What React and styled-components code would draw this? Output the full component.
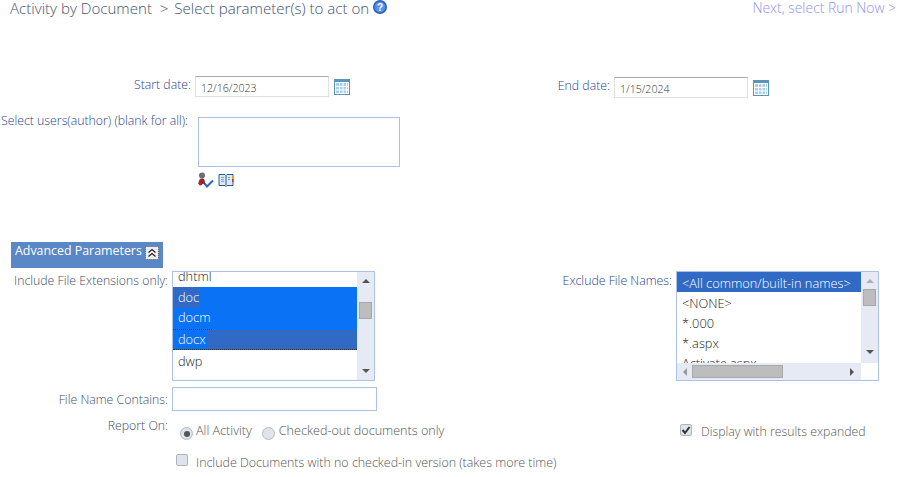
import React from 'react'
import styled, { createGlobalStyle } from 'styled-components'

const GlobalStyle = createGlobalStyle`
  html, body {
    margin: 0;
    padding: 0;
    background: #fff;
  }
  body {
    font-family: 'Open Sans', 'Noto Sans', sans-serif;
    font-weight: 300;
    font-size: 12.3px;
    color: #444;
    overflow: hidden;
  }
`

const Page = styled.div`
  width: 897px;
  height: 477px;
  overflow: hidden;
`

const Header = styled.div`
  display: flex;
  justify-content: space-between;
  height: 76px;
  padding: 0 1px 0 10px;
  line-height: 16px;
`

const Crumb = styled.div`
  color: #44546f;
  font-size: 15.1px;
  display: flex;
  gap: 4px;
`

const CrumbStep = styled.span`
  margin-left: 2px;
`

const NextLink = styled.div`
  color: #9292ee;
  font-size: 13.9px;
`

const Row = styled.div`
  display: flex;
  margin-top: ${p => p.$top || 0}px;
`

const Side = styled.div`
  display: flex;
  width: ${p => p.$width}px;
  margin-top: ${p => p.$top || 0}px;
  flex: none;
`

const Label = styled.div`
  width: ${p => p.$width}px;
  flex: none;
  text-align: right;
  white-space: nowrap;
  color: #1f3f8f;
  line-height: 16px;
  margin-top: ${p => p.$shift || 0}px;
`

const GreyLabel = styled(Label)`
  color: #444c6a;
`

const TextBox = styled.div`
  box-sizing: border-box;
  width: ${p => p.$width}px;
  height: ${p => p.$height}px;
  margin-left: ${p => p.$left || 4}px;
  border: 1px solid ${p => p.$date ? '#e1e1e1' : '#abc1e6'};
  border-top-color: ${p => p.$date ? '#a9a9a9' : '#abc1e6'};
  padding: 4px 5px;
  font-size: 10.6px;
  line-height: 14px;
  color: #333;
`

const CalendarIcon = styled.svg`
  width: 16px;
  height: 16px;
  margin: 3px 0 0 5px;
`

const PickerIcons = styled.div`
  display: flex;
  gap: 4px;
  margin: 5px 0 0 198px;
  height: 16px;
`

const AdvancedBar = styled.div`
  width: 152px;
  height: 26px;
  margin: 54px 0 0 11px;
  box-sizing: border-box;
  padding: 1px 0 0 4px;
  display: flex;
  align-items: flex-start;
  gap: 3px;
  background: #5a87c5;
  color: #fff;
  font-weight: 400;
  font-size: 12.4px;
  line-height: 16px;
  white-space: nowrap;
`

const ListBox = styled.div`
  box-sizing: border-box;
  display: grid;
  grid-template-columns: 1fr 17px;
  grid-template-rows: ${p => p.$hscroll ? '1fr 17px' : '1fr'};
  width: 203px;
  height: 110px;
  margin-left: 4px;
  border: 1px solid #abc1e6;
  overflow: hidden;
  font-size: 12.8px;
  color: #333;
`

const ListItems = styled.div`
  overflow: hidden;
  min-width: 0;
`

const ListInner = styled.div`
  margin-top: ${p => p.$offset || 0}px;
`

const Option = styled.div`
  box-sizing: border-box;
  height: ${p => p.$height || 20}px;
  line-height: ${p => p.$line || p.$height || 20}px;
  padding-left: 5px;
  white-space: nowrap;
  color: ${p => p.$selected ? '#fff' : '#222'};
  background: ${p => p.$tone === 'dark' ? '#316ac5' : p.$selected ? '#0a72f5' : 'transparent'};
  border-bottom: ${p => p.$dotted ? '1px dotted #333' : 'none'};
`

const OptionText = styled.span`
  display: inline-block;
  height: 100%;
  margin-left: -5px;
  padding: 0 1px 0 5px;
  background: ${p => p.$bg || 'transparent'};
  border-bottom: ${p => p.$dotted ? '1px dotted #333' : 'none'};
  box-sizing: border-box;
`

const VBar = styled.div`
  background: #e6eaf4;
  display: flex;
  flex-direction: column;
  align-items: center;
  justify-content: space-between;
  padding: 7px 0 ${p => p.$bottom || 7}px;
  position: relative;
`

const HBar = styled.div`
  background: #e6eaf4;
  display: flex;
  align-items: center;
  padding: 0 7px 0 6px;
`

const Thumb = styled.div`
  position: absolute;
  box-sizing: border-box;
  left: 2px;
  top: ${p => p.$top}px;
  width: 13px;
  height: 17px;
  background: #bdbdbd;
  border: 1px solid #a8a8a8;
`

const HThumb = styled.div`
  box-sizing: border-box;
  width: 91px;
  height: 13px;
  margin: 0 auto 0 5px;
  background: #bdbdbd;
  border: 1px solid #a8a8a8;
`

const Arrow = styled.div`
  width: 0;
  height: 0;
  border-style: solid;
  border-color: transparent;
  border-width: ${p => p.$horizontal ? '4px 0 4px 4px' : '0 4px 4px'};
  border-bottom-color: ${p => p.$horizontal ? 'transparent' : p.$color || '#555'};
  border-left-color: ${p => p.$horizontal ? p.$color || '#555' : 'transparent'};
  transform: ${p => p.$flip ? 'rotate(180deg)' : 'none'};
`

const Corner = styled.div`
  background: #fff;
`

const OptionsLine = styled.div`
  display: flex;
  align-items: center;
  margin-left: ${p => p.$left}px;
  margin-top: ${p => p.$top || 0}px;
  font-size: ${p => p.$size}px;
  line-height: 16px;
  color: #555;
  white-space: nowrap;
`

const Radio = styled.span`
  box-sizing: border-box;
  width: 13px;
  height: 13px;
  flex: none;
  margin: 5px ${p => p.$gap || 3}px 0 ${p => p.$left || 0}px;
  border-radius: 50%;
  border: 1px solid #b4b9c6;
  background: #dfe3ec;
  display: flex;
  align-items: center;
  justify-content: center;
  &::after {
    content: '';
    display: ${p => p.$checked ? 'block' : 'none'};
    width: 6px;
    height: 6px;
    border-radius: 50%;
    background: #555;
  }
`

const Check = styled.span`
  box-sizing: border-box;
  width: 12px;
  height: 12px;
  flex: none;
  margin: 0 ${p => p.$gap}px ${p => p.$raise}px 0;
  border-radius: 2px;
  border: 1px solid #aeb3bf;
  background: #dfe3ec;
  display: flex;
  align-items: center;
  justify-content: center;
  color: #333;
`

const Calendar = () => (
  <CalendarIcon viewBox="0 0 16 16">
    <rect x="0.5" y="0.5" width="15" height="15" fill="#fff" stroke="#5c93b8" />
    <rect x="1" y="1" width="14" height="2" fill="#5c93b8" />
    <path d="M2 4h12v10H2z" fill="#a8d0ee" />
    <path d="M5.5 4v10M9 4v10M12.5 4v10M2 7.5h12M2 11h12" stroke="#fff" strokeWidth="1" />
  </CalendarIcon>
)

const CollapseIcon = () => (
  <svg width="14" height="14" viewBox="0 0 14 14" style={{ marginTop: 3 }}>
    <rect x="0.5" y="0.5" width="13" height="13" rx="1" fill="#eee" stroke="#555" strokeDasharray="1 1" />
    <path d="M3.5 6.5L7 3.5l3.5 3M3.5 10.5L7 7.5l3.5 3" fill="none" stroke="#222" strokeWidth="1.2" />
  </svg>
)

const CheckNames = () => (
  <svg width="16" height="16" viewBox="0 0 16 16">
    <circle cx="4" cy="3.500" r="3" fill="#6f6f6f" />
    <path d="M0.500 12c0-3.500 1-5.500 3.500-5.500S7 8.500 7 12z" fill="#8a2a33" />
    <circle cx="2.500" cy="11.500" r="2" fill="#b5232c" />
    <path d="M6.500 11.500l2.500 3 6-6" fill="none" stroke="#2f67c0" strokeWidth="2" />
  </svg>
)

const AddressBook = () => (
  <svg width="16" height="14" viewBox="0 0 16 14" style={{ marginTop: 1 }}>
    <path d="M1 1.500h6l1 1 1-1h6v11H9l-1 1-1-1H1z" fill="#dceaf8" stroke="#2b5c96" />
    <path d="M8 2.500v10" stroke="#2b5c96" />
    <path d="M3 4.500h3M3 6.500h3M3 8.500h3M10 4.500h2M10 6.500h2" stroke="#7fa6cf" />
    <path d="M14 3h1.500v3H14z" fill="#d9a520" />
    <path d="M14 6h1.500v3H14z" fill="#c0392b" />
  </svg>
)

export default function App() {
  return (
    <Page>
      <GlobalStyle />
      <Header>
        <Crumb>
          <span>
            Activity by Document &nbsp;&gt;<CrumbStep> Select parameter(s) to act on</CrumbStep>
          </span>
          <svg width="14" height="14" viewBox="0 0 14 14">
            <circle cx="7" cy="7" r="7" fill="#2a62c4" />
            <circle cx="7" cy="7" r="5.200" fill="#5c95e8" />
            <text x="7" y="10.500" textAnchor="middle" fontSize="10" fontWeight="700" fill="#fff" fontFamily="Liberation Sans, sans-serif">?</text>
          </svg>
        </Crumb>
        <NextLink>Next, select Run Now &gt;</NextLink>
      </Header>

      <Row>
        <Side $width={500}>
          <Label $width={191} $shift={1}>Start date:</Label>
          <TextBox $date $width={134} $height={21}>12/16/2023</TextBox>
          <Calendar />
        </Side>
        <Side $width={397} $top={1}>
          <Label $width={110} $shift={1}>End date:</Label>
          <TextBox $date $width={134} $height={21}>1/15/2024</TextBox>
          <Calendar />
        </Side>
      </Row>

      <Row $top={19}>
        <Label $width={188} $shift={-4}>Select users(author) (blank for all):</Label>
        <TextBox $left={10} $width={202} $height={50} />
      </Row>
      <PickerIcons>
        <CheckNames />
        <AddressBook />
      </PickerIcons>

      <AdvancedBar>
        Advanced Parameters
        <CollapseIcon />
      </AdvancedBar>

      <Row $top={3}>
        <Side $width={500}>
          <GreyLabel $width={168} $shift={2}>Include File Extensions only:</GreyLabel>
          <ListBox>
            <ListItems>
              <ListInner $offset={-6}>
                <Option $height={21}>dhtml</Option>
                <Option $selected $height={21}>
                  <OptionText $bg="#316ac5">doc</OptionText>
                </Option>
                <Option $selected $height={22} $line={19}>
                  <OptionText $dotted>docm</OptionText>
                </Option>
                <Option $selected $tone="dark" $dotted $height={20} $line={18}>
                  <OptionText $bg="#0a72f5">docx</OptionText>
                </Option>
                <Option $height={24} $line={22}>dwp</Option>
                <Option $height={20}>exe</Option>
              </ListInner>
            </ListItems>
            <VBar>
              <Arrow />
              <Thumb $top={30} />
              <Arrow $flip />
            </VBar>
          </ListBox>
        </Side>
        <Side $width={397}>
          <Label $width={172} $shift={2}>Exclude File Names:</Label>
          <ListBox $hscroll>
            <ListItems>
              <Option $selected $tone="dark" $line={22}>&lt;All common/built-in names&gt;</Option>
              <Option $line={22}>&lt;NONE&gt;</Option>
              <Option $line={22}>*.000</Option>
              <Option $line={22}>*.aspx</Option>
              <Option $line={22}>Activate.aspx</Option>
            </ListItems>
            <VBar $bottom={9}>
              <Arrow $color="#b0b0b0" />
              <Thumb $top={17} />
              <Arrow $flip />
            </VBar>
            <HBar>
              <Arrow $horizontal $flip $color="#999" />
              <HThumb />
              <Arrow $horizontal />
            </HBar>
            <Corner />
          </ListBox>
        </Side>
      </Row>

      <Row $top={6}>
        <GreyLabel $width={168} $shift={5}>File Name Contains:</GreyLabel>
        <TextBox $width={205} $height={24} />
      </Row>

      <Row $top={6}>
        <Side $width={500}>
          <GreyLabel $width={168} $shift={1}>Report On:</GreyLabel>
          <OptionsLine $left={12} $top={5} $size={12.6}>
            <Radio $checked />All Activity
            <Radio $left={10} $gap={4} />Checked-out documents only
          </OptionsLine>
        </Side>
        <OptionsLine $left={180} $top={6} $size={12.3}>
          <Check $gap={9} $raise={4}>
            <svg width="10" height="10" viewBox="0 0 10 10">
              <path d="M1.500 5l2.500 3 4.500-6" fill="none" stroke="#333" strokeWidth="2" />
            </svg>
          </Check>
          Display with results expanded
        </OptionsLine>
      </Row>

      <Row $top={14}>
        <OptionsLine $left={176} $size={12.43}>
          <Check $gap={8} $raise={6} />
          Include Documents with no checked-in version (takes more time)
        </OptionsLine>
      </Row>
    </Page>
  )
}
